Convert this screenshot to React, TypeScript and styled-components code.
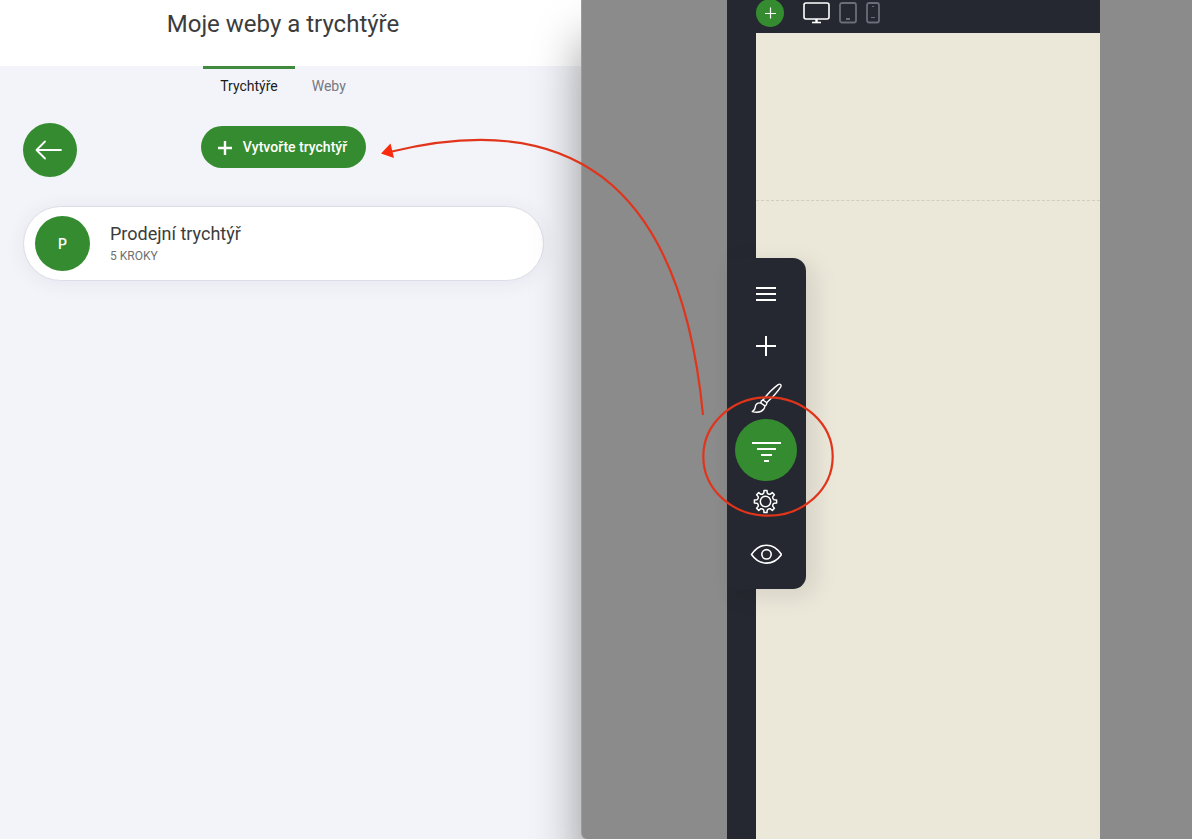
import React from "react";
import styled, { createGlobalStyle } from "styled-components";

const green = "#358c30";
const ink = "#252830";

const GlobalStyle = createGlobalStyle`
  *, *::before, *::after { box-sizing: border-box; }
  body {
    margin: 0;
    font-family: Roboto, "Liberation Sans", sans-serif;
    color: #3c3c3c;
    background: #f3f4f9;
  }
  h1, h2, p { margin: 0; }
  button { font: inherit; padding: 0; border: 0; background: none; color: inherit; cursor: pointer; }
`;

const Page = styled.div`
  display: grid;
  grid-template-columns: minmax(0, 581fr) minmax(0, 611fr);
  min-height: 100vh;
  overflow: hidden;
`;

const Sidebar = styled.section`
  display: flex;
  flex-direction: column;
  background: #f3f4f9;
`;

const Header = styled.header`
  height: 66px;
  padding: 8px 15px 0 0;
  background: #fff;
  text-align: center;
`;

const Title = styled.h1`
  font-size: 24px;
  line-height: 32px;
  font-weight: 400;
`;

const Content = styled.div`
  padding: 0 37px 0 23px;
`;

const Tabs = styled.nav`
  display: flex;
  justify-content: center;
  padding-right: 1px;
`;

const Tab = styled.a<{ $active?: boolean }>`
  padding: 7px 17px 8px;
  border-top: 3px solid ${(p) => (p.$active ? "#3f8a3f" : "transparent")};
  font-size: 14px;
  line-height: 20px;
  color: ${(p) => (p.$active ? "#1b1b20" : "#77777f")};
  text-decoration: none;
`;

const Actions = styled.div`
  display: grid;
  grid-template-columns: 1fr auto 1fr;
  margin-top: 19px;
`;

const BackButton = styled.button`
  display: grid;
  place-items: center;
  width: 54px;
  height: 54px;
  padding-right: 2px;
  border-radius: 50%;
  background: ${green};
`;

const CreateButton = styled.button`
  display: flex;
  align-items: center;
  gap: 11px;
  height: 42px;
  margin-top: 3px;
  padding: 0 19px 0 17px;
  border-radius: 21px;
  background: ${green};
  color: #fff;
  font-size: 14px;
  font-weight: 500;
  line-height: 20px;
`;

const FunnelList = styled.div`
  margin-top: 29px;
`;

const FunnelCard = styled.article`
  display: flex;
  align-items: center;
  gap: 20px;
  height: 75px;
  padding: 0 11px;
  border: 1px solid #dddde6;
  border-radius: 38px;
  background: #fff;
  box-shadow: 0 2px 20px rgba(60, 60, 110, 0.07);
`;

const Avatar = styled.span`
  display: grid;
  place-items: center;
  width: 55px;
  height: 55px;
  border-radius: 50%;
  background: ${green};
  color: #fff;
  font-size: 14px;
  font-weight: 500;
`;

const FunnelName = styled.h2`
  font-size: 18px;
  font-weight: 400;
  line-height: 24px;
`;

const FunnelMeta = styled.p`
  font-size: 12px;
  line-height: 20px;
  color: #707070;
`;

const EditorWindow = styled.main`
  position: relative;
  display: flex;
  padding: 0 92px 0 146px;
  border-left: 1px solid #9c9c9e;
  border-bottom-left-radius: 6px;
  background: #8b8b8b;
  box-shadow: 0 40px 48px rgba(0, 0, 0, 0.4);
`;

const Editor = styled.div`
  flex: 1;
  display: flex;
  flex-direction: column;
  margin-left: -1px;
  background: ${ink};
`;

const TopBar = styled.div`
  display: flex;
  align-items: center;
  height: 33px;
  padding: 0 0 7px 29px;
`;

const AddButton = styled.button`
  display: grid;
  place-items: center;
  width: 28px;
  height: 28px;
  margin-right: 19px;
  border-radius: 50%;
  background: ${green};
`;

const DeviceButton = styled.button<{ $active?: boolean }>`
  display: grid;
  margin-right: 9px;
  color: ${(p) => (p.$active ? "#fff" : "#6b6d78")};
`;

const Workspace = styled.div`
  position: relative;
  flex: 1;
  padding-left: 29px;
`;

const Canvas = styled.div`
  height: 100%;
  background: #ebe7d9;
`;

const CanvasSection = styled.div`
  height: 168px;
  border-bottom: 1px dashed #d0cdc1;
`;

const Dock = styled.aside`
  position: absolute;
  left: 0;
  top: 225px;
  display: flex;
  flex-direction: column;
  align-items: center;
  width: 79px;
  padding: 10px 1px 9px 0;
  border-radius: 0 13px 13px 0;
  background: ${ink};
  box-shadow: 8px 6px 24px rgba(0, 0, 0, 0.1);
`;

const Tool = styled.button<{ $active?: boolean }>`
  display: grid;
  place-items: center;
  width: ${(p) => (p.$active ? 62 : 52)}px;
  height: ${(p) => (p.$active ? 62 : 52)}px;
  margin: ${(p) => (p.$active ? "-5px 0" : "0")};
  border-radius: 50%;
  background: ${(p) => (p.$active ? green : "transparent")};
`;

const Annotation = styled.svg`
  position: absolute;
  left: -347px;
  top: -122px;
  pointer-events: none;
`;

const Stroke = styled.svg`
  display: block;
  fill: none;
  stroke: currentColor;
  color: inherit;
`;

const White = styled(Stroke)`
  color: #fff;
`;

function gearPath(teeth: number, outer: number, inner: number) {
  const step = (Math.PI * 2) / teeth;
  const at = (r: number, a: number) =>
    `${(13.5 + r * Math.sin(a)).toFixed(2)} ${(13.5 - r * Math.cos(a)).toFixed(2)}`;
  let d = "";
  for (let i = 0; i < teeth; i++) {
    const a = i * step;
    d += `${i ? "L" : "M"}${at(outer, a - step * 0.17)}L${at(outer, a + step * 0.17)}`;
    d += `L${at(inner + 0.6, a + step * 0.25)}Q${at(inner - 0.9, a + step * 0.5)} ${at(inner + 0.6, a + step * 0.75)}`;
  }
  return d + "Z";
}

export default function App() {
  return (
    <Page>
      <GlobalStyle />
      <Sidebar>
        <Header>
          <Title>Moje weby a trychtýře</Title>
        </Header>
        <Content>
          <Tabs>
            <Tab href="#trychtyre" $active>Trychtýře</Tab>
            <Tab href="#weby">Weby</Tab>
          </Tabs>
          <Actions>
            <BackButton aria-label="Zpět">
              <White width="28" height="20" viewBox="0 0 28 20" strokeWidth="1.8" strokeLinecap="round" strokeLinejoin="round">
                <path d="M26 10H1.500M10 1.500L1.500 10l8.500 8.500" />
              </White>
            </BackButton>
            <CreateButton>
              <White width="14" height="16" viewBox="0 0 14 16" strokeWidth="2.400">
                <path d="M7 2v14M0 9h14" />
              </White>
              Vytvořte trychtýř
            </CreateButton>
          </Actions>
          <FunnelList>
            <FunnelCard>
              <Avatar>P</Avatar>
              <div>
                <FunnelName>Prodejní trychtýř</FunnelName>
                <FunnelMeta>5 KROKY</FunnelMeta>
              </div>
            </FunnelCard>
          </FunnelList>
        </Content>
      </Sidebar>

      <EditorWindow>
        <Editor>
          <TopBar>
            <AddButton aria-label="Přidat">
              <White width="12" height="12" viewBox="0 0 12 12" strokeWidth="1.2">
                <path d="M6.500 .5v11M1 6.500h11" />
              </White>
            </AddButton>
            <DeviceButton aria-label="Počítač" $active>
              <Stroke width="27" height="22" viewBox="0 0 27 22" strokeWidth="1.600">
                <rect x="1" y="1" width="25" height="16" rx="2" />
                <path d="M13.500 17v4" strokeWidth="2.400" />
                <path d="M9 20.500h9" />
              </Stroke>
            </DeviceButton>
            <DeviceButton aria-label="Tablet">
              <Stroke width="18" height="22" viewBox="0 0 18 22" strokeWidth="1.800">
                <rect x="1" y="1" width="16" height="19.500" rx="2" />
                <path d="M7 17h4" strokeWidth="2" />
              </Stroke>
            </DeviceButton>
            <DeviceButton aria-label="Telefon">
              <Stroke width="14" height="22" viewBox="0 0 14 22" strokeWidth="1.800">
                <rect x="1" y="1" width="12" height="19.500" rx="2" />
                <path d="M6 4.500h2M5 15.500h4" strokeWidth="1.200" />
              </Stroke>
            </DeviceButton>
          </TopBar>
          <Workspace>
            <Canvas>
              <CanvasSection />
            </Canvas>
            <Dock>
              <Tool aria-label="Nabídka">
                <White width="20" height="14" viewBox="0 0 20 14" strokeWidth="2">
                  <path d="M0 1h20M0 7h20M0 13h20" />
                </White>
              </Tool>
              <Tool aria-label="Přidat prvek">
                <White width="20" height="20" viewBox="0 0 20 20" strokeWidth="2">
                  <path d="M10 0v20M0 10h20" />
                </White>
              </Tool>
              <Tool aria-label="Vzhled">
                <White width="32" height="32" viewBox="0 0 32 32" strokeWidth="1.400" strokeLinejoin="round" strokeLinecap="round">
                  <path d="M13 18C17.500 12 23 6.300 28.200 2.600c1.800-1.200 3.600.2 2.500 2.200C27.500 10 22 15.700 16.800 20.400" />
                  <path d="M13 18l3.800 2.700c.2 1.500-.5 2.700-1.900 3.200l-4.200-3c.1-1.500.9-2.600 2.300-2.900z" />
                  <path d="M10.700 20.900c-3.200-.2-5.300 1.600-5.500 4.500-.1 1.700-1.100 3.200-2.900 4.200 4.500 1.100 9.200.4 11.300-2.300.8-1.100 1.200-2.200 1.200-3.400" />
                </White>
              </Tool>
              <Tool aria-label="Trychtýře" $active>
                <White width="30" height="24" viewBox="0 0 30 24" strokeWidth="2">
                  <path d="M1 5h29M6 11h19M10 17h11M13 23h5" />
                </White>
              </Tool>
              <Tool aria-label="Nastavení">
                <White width="28" height="28" viewBox="0 0 28 28" strokeWidth="1.500" strokeLinejoin="round">
                  <path d={gearPath(8, 11.2, 8.2)} />
                  <circle cx="13.500" cy="13.500" r="5.200" />
                </White>
              </Tool>
              <Tool aria-label="Náhled">
                <White width="32" height="20" viewBox="0 0 32 20" strokeWidth="1.600" strokeLinejoin="round">
                  <path d="M1.500 10.500C5.500 4.500 10.500 1.200 16.500 1.200s11 3.300 15 9.300c-4 5.700-9 8.600-15 8.600s-11-2.900-15-8.600z" />
                  <circle cx="16.500" cy="10.300" r="4.700" />
                </White>
              </Tool>
              <Annotation width="456" height="384" viewBox="380 136 456 384" fill="none" stroke="#e0351b" strokeWidth="2.200">
                <ellipse cx="768" cy="456.500" rx="64.700" ry="59.200" />
                <path d="M703 415C680 175 563 110 392 151.500" />
                <path d="M381 153.500L390.500 143.500L394 158z" fill="#fb2a0c" stroke="none" />
              </Annotation>
            </Dock>
          </Workspace>
        </Editor>
      </EditorWindow>
    </Page>
  );
}
